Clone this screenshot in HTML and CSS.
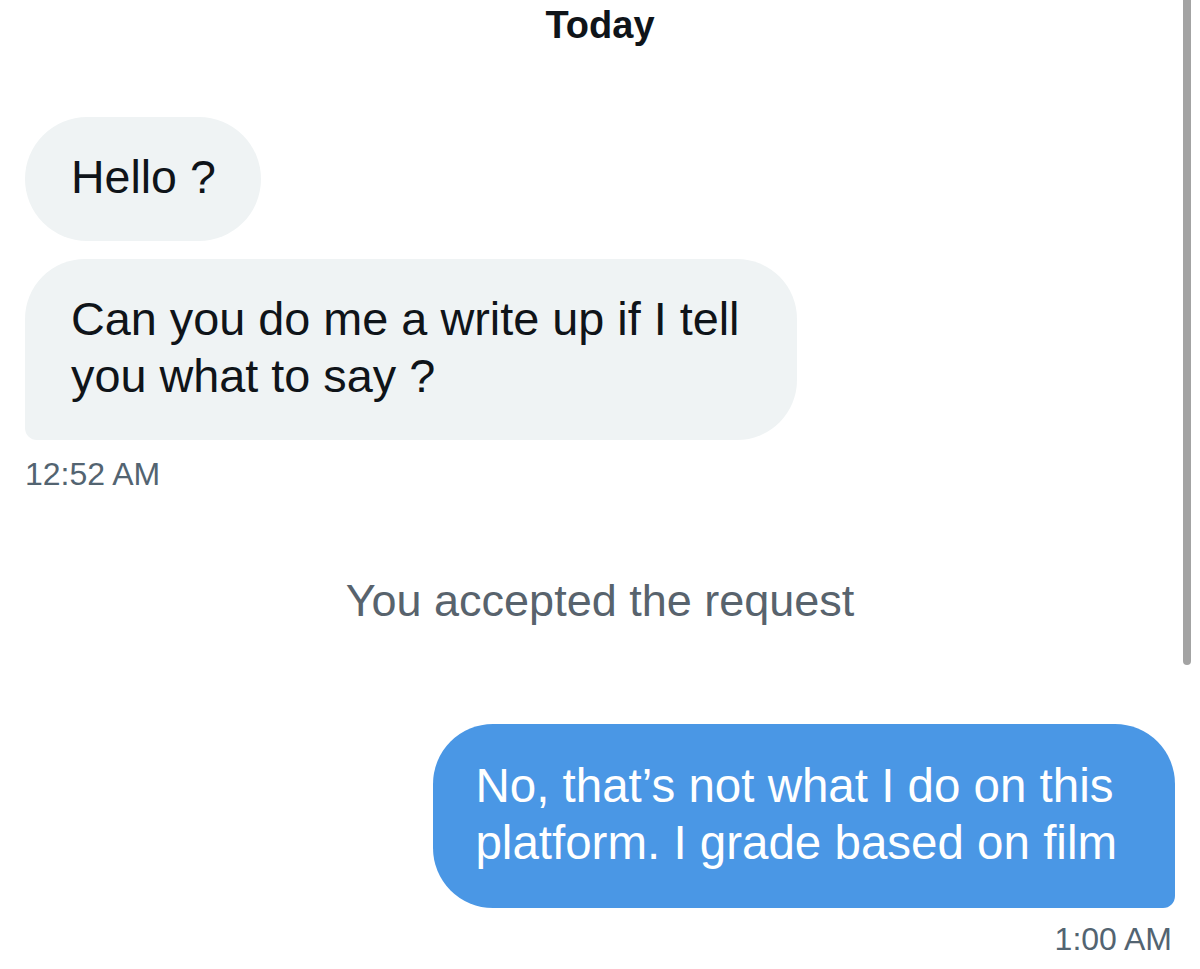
FILE: index.html
```html
<!DOCTYPE html>
<html lang="en">
<head>
<meta charset="utf-8">
<title>Messages</title>
<link rel="stylesheet" href="styles.css">
</head>
<body>
<div class="chat">
  <div class="day">Today</div>
  <div class="group received">
    <div class="bubble">Hello ?</div>
    <div class="bubble last">Can you do me a write up if I tell<br>you what to say ?</div>
    <div class="time">12:52 AM</div>
  </div>
  <div class="notice">You accepted the request</div>
  <div class="group sent">
    <div class="bubble last">No, that’s not what I do on this<br>platform. I grade based on film</div>
    <div class="time">1:00 AM</div>
  </div>
</div>
<div class="scrollbar"></div>
</body>
</html>
```
FILE: styles.css
```css
html, body {
  margin: 0;
  padding: 0;
  background: #ffffff;
}
body {
  font-family: "Liberation Sans", Arial, sans-serif;
  color: #0f1419;
  width: 1200px;
  height: 969px;
  overflow: hidden;
  position: relative;
}
.chat {
  display: flex;
  flex-direction: column;
  padding: 0 25px;
}
.day {
  text-align: center;
  font-weight: 700;
  font-size: 38px;
  line-height: 50px;
  height: 50px;
  margin-bottom: 67px;
}
.group {
  display: flex;
  flex-direction: column;
  gap: 18px;
}
.received { align-items: flex-start; }
.sent { align-items: flex-end; }
.bubble {
  font-size: 46.5px;
  line-height: 57px;
  padding: 32px 45px 35px 46px;
  border-radius: 62px;
  white-space: nowrap;
}
.received .bubble {
  background: #eff3f4;
  color: #0f1419;
}
.received .bubble.last {
  font-size: 46.8px;
  border-radius: 60px 60px 60px 12px;
  padding-right: 58px;
}
.sent .bubble {
  background: #4a97e5;
  color: #ffffff;
  font-size: 47.5px;
  padding: 33px 58px 37px 42px;
}
.sent .bubble.last {
  border-radius: 60px 60px 12px 60px;
}
.time {
  font-size: 32px;
  line-height: 36px;
  color: #536471;
}
.received .time { margin-top: -2px; }
.sent .time {
  margin-top: -5px;
  padding-right: 3px;
}
.notice {
  text-align: center;
  font-size: 45px;
  line-height: 50px;
  color: #58636d;
  margin: 84px 0 98px;
}
.scrollbar {
  position: absolute;
  top: 0;
  right: 9px;
  width: 8px;
  height: 665px;
  background: #a3a3a3;
  border-radius: 0 0 4px 4px;
}
```
